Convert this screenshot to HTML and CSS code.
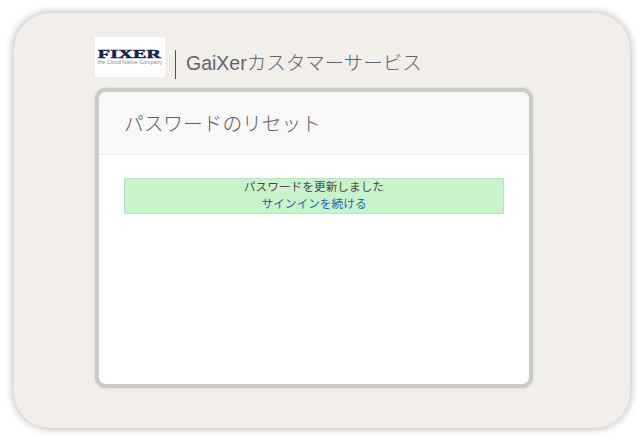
FILE: index.html
```html
<!DOCTYPE html>
<html lang="ja">
<head>
<meta charset="utf-8">
<title>GaiXerカスタマーサービス</title>
<link rel="stylesheet" href="styles.css">
</head>
<body>
<main class="frame">
  <header class="brand">
    <div class="logo">
      <span class="logo-name">FIXER</span>
      <span class="logo-tag">the Cloud Native Company</span>
    </div>
    <div class="divider"></div>
    <div class="service">GaiXerカスタマーサービス</div>
  </header>
  <section class="card">
    <div class="card-head">パスワードのリセット</div>
    <div class="card-body">
      <div class="alert">
        <div class="alert-text">パスワードを更新しました</div>
        <a class="alert-link" href="#">サインインを続ける</a>
      </div>
    </div>
  </section>
</main>
</body>
</html>
```

FILE: styles.css
```css
* { box-sizing: border-box; }
html, body { margin: 0; height: 100%; background: #fff; }
body {
  width: 644px;
  height: 441px;
  overflow: hidden;
  padding: 13px 14px;
  font-family: "Liberation Sans", "Noto Sans CJK JP", sans-serif;
}
.frame {
  width: 616px;
  height: 415px;
  background: #f2efea;
  border-radius: 36px;
  box-shadow: 0 0 7px 2px rgba(0, 0, 0, 0.22);
  padding: 24px 97px 0 81px;
}
.brand {
  display: flex;
  align-items: flex-start;
  height: 51px;
}
.logo {
  width: 70px;
  height: 40px;
  background: #fff;
  display: flex;
  flex-direction: column;
  align-items: center;
  padding-top: 12px;
  flex: none;
}
.logo-name {
  font-family: "Liberation Serif", serif;
  font-weight: 700;
  font-size: 13.5px;
  line-height: 10px;
  letter-spacing: 0.2px;
  color: #16234a;
  transform: scaleX(1.48);
  -webkit-text-stroke: 0.5px #16234a;
}
.logo-tag {
  margin-top: 1px;
  font-size: 5.4px;
  line-height: 5px;
  white-space: nowrap;
  color: #8a8d9a;
}
.divider {
  width: 1px;
  height: 29px;
  margin: 13px 10px 0;
  background: #55504c;
  flex: none;
}
.service {
  margin-top: 12px;
  font-size: 19.5px;
  font-weight: 300;
  line-height: 28px;
  color: #62656a;
  white-space: nowrap;
}
.card {
  width: 438px;
  height: 300px;
  border: 4px solid #cbcbc9;
  border-radius: 11px;
  background: #fff;
  overflow: hidden;
  box-shadow: 0 0 2px rgba(0, 0, 0, 0.2);
}
.card-head {
  height: 63px;
  background: #f8f8f8;
  border-bottom: 1px solid #ececec;
  padding: 18px 25px 0;
  font-size: 19.7px;
  font-weight: 300;
  line-height: 28px;
  color: #5c6066;
}
.card-body {
  padding: 23px 25px;
}
.alert {
  width: 380px;
  height: 36px;
  background: #c8f3cd;
  border: 1px solid #b6e5bd;
  text-align: center;
  font-size: 11.7px;
  line-height: 17px;
  color: #4a4a4a;
}
.alert-text {
  margin-top: -1px;
}
.alert-link {
  display: block;
  color: #1c6aa5;
  text-decoration: none;
}
```
